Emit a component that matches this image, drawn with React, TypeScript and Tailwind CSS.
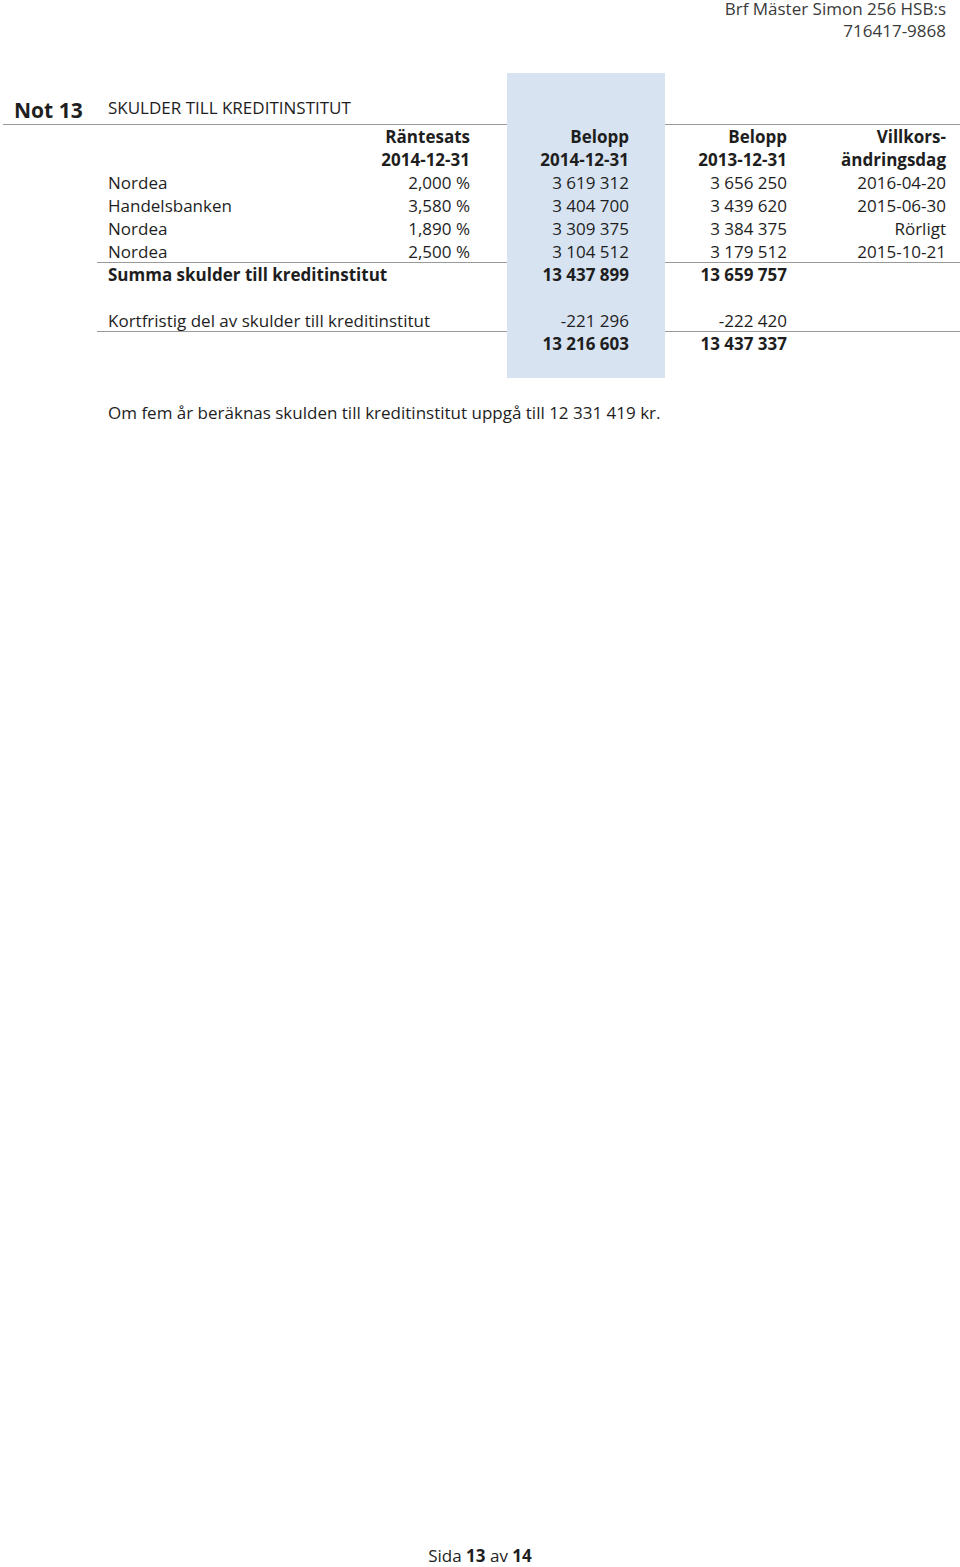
const rows = [
  { namn: "Nordea", ranta: "2,000 %", b14: "3 619 312", b13: "3 656 250", dag: "2016-04-20" },
  { namn: "Handelsbanken", ranta: "3,580 %", b14: "3 404 700", b13: "3 439 620", dag: "2015-06-30" },
  { namn: "Nordea", ranta: "1,890 %", b14: "3 309 375", b13: "3 384 375", dag: "Rörligt" },
  { namn: "Nordea", ranta: "2,500 %", b14: "3 104 512", b13: "3 179 512", dag: "2015-10-21" },
];

const grid = "grid grid-cols-[252px_158px_158px_158px_137px] ml-[97px] h-[23px] leading-[23px]";
const band = "bg-[#d7e3f1] text-right pr-[36px] whitespace-nowrap";

function Row({
  namn = "",
  ranta = "",
  b14 = "",
  b13 = "",
  dag = "",
  bold = false,
  line = false,
}: {
  namn?: string;
  ranta?: string;
  b14?: string;
  b13?: string;
  dag?: string;
  bold?: boolean;
  line?: boolean;
}) {
  return (
    <div className={`${grid} ${bold ? "font-bold" : ""} ${line ? "border-b border-[#9a9a9a]" : ""}`}>
      <div className="pl-[11px] whitespace-nowrap">{namn}</div>
      <div className="text-right pr-[37px] whitespace-nowrap">{ranta}</div>
      <div className={band}>{b14}</div>
      <div className="text-right pr-[36px] whitespace-nowrap">{b13}</div>
      <div className="text-right pr-[14px] whitespace-nowrap">{dag}</div>
    </div>
  );
}

export default function App() {
  return (
    <div className="min-h-[1567px] flex flex-col bg-white text-[#1e1e1e] font-['Open_Sans',sans-serif] text-[17px]">
      {/* Sidhuvud */}
      <div className="text-right pr-[14px] leading-[22px] -mt-[2px] text-[#3a3a3a]">
        <div>Brf Mäster Simon 256 HSB:s</div>
        <div>716417-9868</div>
      </div>

      {/* Rubrik */}
      <div className="mt-[31px] ml-[3px] h-[52px] border-b border-[#9a9a9a] grid grid-cols-[94px_410px_158px_1fr]">
        <div className="pl-[11px] pt-[22px] text-[21px] font-bold leading-[30px]">Not 13</div>
        <div className="pl-[11px] pt-[22px] leading-[26px] whitespace-nowrap">SKULDER TILL KREDITINSTITUT</div>
        <div className="bg-[#d7e3f1]"></div>
        <div></div>
      </div>

      {/* Tabell */}
      <Row ranta="Räntesats" b14="Belopp" b13="Belopp" dag="Villkors-" bold />
      <Row ranta="2014-12-31" b14="2014-12-31" b13="2013-12-31" dag="ändringsdag" bold />
      {rows.map((r, i) => (
        <Row key={i} {...r} line={i === rows.length - 1} />
      ))}
      <Row namn="Summa skulder till kreditinstitut" b14="13 437 899" b13="13 659 757" bold />
      <Row />
      <Row namn="Kortfristig del av skulder till kreditinstitut" b14="-221 296" b13="-222 420" line />
      <Row b14="13 216 603" b13="13 437 337" bold />
      <Row />

      <p className="mt-[23px] pl-[108px] leading-[23px] whitespace-nowrap">
        Om fem år beräknas skulden till kreditinstitut uppgå till 12 331 419 kr.
      </p>

      {/* Sidfot */}
      <div className="mt-auto text-center leading-[22px]">
        Sida <span className="font-bold">13</span> av <span className="font-bold">14</span>
      </div>
    </div>
  );
}
